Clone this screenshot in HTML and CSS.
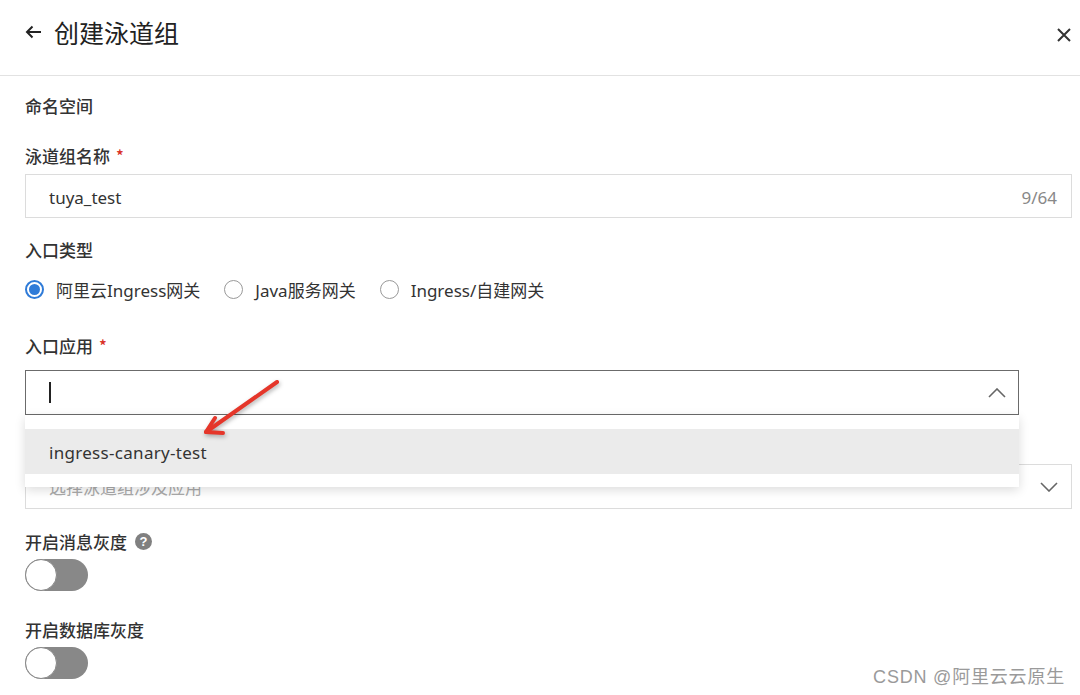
FILE: index.html
```html
<!DOCTYPE html>
<html lang="zh-CN">
<head>
  <meta charset="UTF-8" />
  <meta name="viewport" content="width=device-width, initial-scale=1.0"/>
  <link rel="stylesheet" href="styles.css">
</head>
<body>
  <div class="header">
    <div class="header-left">
      <svg class="back-icon" width="17" height="14" viewBox="0 0 17 14">
        <path d="M16 7H2M7.5 1.5L2 7l5.5 5.5" fill="none" stroke="#222" stroke-width="2"/>
      </svg>
      <h1 class="title">创建泳道组</h1>
    </div>
    <svg class="close-icon" width="14" height="14" viewBox="0 0 14 14">
      <path d="M1 1l12 12M13 1L1 13" stroke="#333" stroke-width="2"/>
    </svg>
  </div>

  <div class="form">
    <div class="field field-namespace">
      <label class="label">命名空间</label>
    </div>

    <div class="field field-name">
      <label class="label">泳道组名称 <span class="required">*</span></label>
      <div class="input">
        <span class="input-text">tuya_test</span>
        <span class="counter">9/64</span>
      </div>
    </div>

    <div class="field field-type">
      <label class="label">入口类型</label>
      <div class="radio-group">
        <span class="radio checked"><i></i>阿里云Ingress网关</span>
        <span class="radio"><i></i>Java服务网关</span>
        <span class="radio"><i></i>Ingress/自建网关</span>
      </div>
    </div>

    <div class="field field-entry">
      <label class="label">入口应用 <span class="required">*</span></label>
      <div class="select-wrap">
        <div class="select focused">
          <span class="caret"></span>
          <svg class="chevron" width="18" height="10" viewBox="0 0 18 10">
            <path d="M1 9l8-8 8 8" fill="none" stroke="#666" stroke-width="1.6"/>
          </svg>
        </div>
        <div class="dropdown">
          <div class="option active">ingress-canary-test</div>
        </div>
      </div>
    </div>

    <!-- label of this field sits under the open dropdown -->
    <div class="field field-apps">
      <div class="select">
        <span class="placeholder">选择泳道组涉及应用</span>
        <svg class="chevron" width="18" height="10" viewBox="0 0 18 10">
          <path d="M1 1l8 8 8-8" fill="none" stroke="#666" stroke-width="1.6"/>
        </svg>
      </div>
    </div>

    <div class="field field-mq">
      <label class="label">开启消息灰度 <span class="help">?</span></label>
      <div class="switch"><span class="knob"></span></div>
    </div>

    <div class="field field-db">
      <label class="label">开启数据库灰度</label>
      <div class="switch"><span class="knob"></span></div>
    </div>
  </div>

  <svg class="annotation" width="100" height="70" viewBox="0 0 100 70">
    <g fill="none" stroke="#e5362a" stroke-width="4" stroke-linecap="round" stroke-linejoin="round">
      <path d="M77 6L6 56"/>
      <path d="M15 42L6 56l17 1"/>
    </g>
  </svg>

  <div class="watermark">CSDN @阿里云云原生</div>
</body>
</html>
```

FILE: styles.css
```css
body {
  margin: 0;
  background: #fff;
  color: #333;
  font-family: "Noto Sans", "Noto Sans CJK SC", sans-serif;
  font-size: 17px;
  position: relative;
  height: 695px;
  overflow: hidden;
}

.header {
  height: 76px;
  border-bottom: 1px solid #e2e2e2;
  display: flex;
  align-items: center;
  justify-content: space-between;
  padding: 0 9px 0 25px;
  box-sizing: border-box;
}
.header-left {
  display: flex;
  align-items: center;
  gap: 12px;
  margin-top: -11px;
}
.title {
  margin: 0;
  font-size: 25px;
  font-weight: 400;
  color: #222;
  font-family: "Noto Sans CJK SC", sans-serif;
}
.close-icon {
  margin-top: -6px;
}

.form {
  padding: 18px 8px 0 25px;
}

.label {
  display: flex;
  align-items: center;
  height: 24px;
  padding-bottom: 2px;
  box-sizing: border-box;
  font-weight: 500;
  color: #333;
  font-family: "Noto Sans CJK SC", sans-serif;
}
.required {
  color: #d93026;
  margin-left: 6px;
  font-size: 16px;
}

.field-name { margin-top: 26px; }
.field-name .input { margin-top: 6px; }
.field-type { margin-top: 20px; }
.field-entry { margin-top: 33px; }
.field-entry .select-wrap { margin-top: 12px; margin-right: 53px; }
.field-apps { margin-top: 49px; }
.field-mq { margin-top: 21px; }
.field-db { margin-top: 27px; }

.input {
  height: 44px;
  border: 1px solid #dcdcdc;
  box-sizing: border-box;
  display: flex;
  align-items: center;
  justify-content: space-between;
  padding: 2px 14px 0 23px;
}
.input-text { color: #333; }
.counter { color: #888; }

.radio-group {
  display: flex;
  align-items: center;
  height: 24px;
  margin-top: 15px;
  gap: 24px;
}
.radio {
  display: flex;
  align-items: center;
  gap: 12px;
  color: #333;
}
.radio i {
  width: 19px;
  height: 19px;
  border: 1px solid #999;
  border-radius: 50%;
  box-sizing: border-box;
  position: relative;
}
.radio.checked i {
  border: 2px solid #2f7bd8;
}
.radio.checked i::after {
  content: "";
  position: absolute;
  left: 2px;
  top: 2px;
  width: 11px;
  height: 11px;
  border-radius: 50%;
  background: #2f7bd8;
}

.select-wrap {
  position: relative;
}
.select {
  height: 45px;
  border: 1px solid #dcdcdc;
  box-sizing: border-box;
  display: flex;
  align-items: center;
  justify-content: space-between;
  padding: 0 13px 0 23px;
}
.select.focused {
  border-color: #6b6b6b;
  padding-right: 12px;
}
.caret {
  width: 2px;
  height: 21px;
  background: #222;
}
.placeholder { color: #aaa; font-family: "Noto Sans CJK SC", sans-serif; }

.dropdown {
  position: absolute;
  left: 0;
  right: 0;
  top: 100%;
  background: #fff;
  padding: 14px 0 13px;
  box-shadow: 0 3px 10px rgba(0, 0, 0, 0.14);
  z-index: 2;
}
.option {
  height: 45px;
  display: flex;
  align-items: center;
  padding: 1px 0 0 24px;
  box-sizing: border-box;
  color: #333;
  letter-spacing: 0.3px;
}
.option.active { background: #ebebeb; }

.help {
  display: inline-flex;
  align-items: center;
  justify-content: center;
  width: 17px;
  height: 17px;
  border-radius: 50%;
  background: #808080;
  color: #fff;
  font-size: 13px;
  font-weight: 700;
  margin-left: 8px;
  font-family: "Liberation Sans", sans-serif;
}

.switch {
  margin-top: 5px;
  width: 63px;
  height: 32px;
  border-radius: 16px;
  background: #888;
  position: relative;
}
.knob {
  position: absolute;
  left: 0;
  top: 0;
  width: 32px;
  height: 32px;
  border-radius: 50%;
  background: #fff;
  border: 1px solid #888;
  box-sizing: border-box;
}

.annotation {
  position: absolute;
  left: 200px;
  top: 376px;
  z-index: 3;
  filter: drop-shadow(1px 2px 2px rgba(0, 0, 0, 0.3));
}

.watermark {
  position: absolute;
  right: 15px;
  bottom: 7px;
  color: #9a9a9a;
  font-size: 18px;
  font-family: "Liberation Sans", "Noto Sans CJK SC", sans-serif;
  letter-spacing: 0.8px;
  text-shadow: 0 0 2px #fff;
}
```
